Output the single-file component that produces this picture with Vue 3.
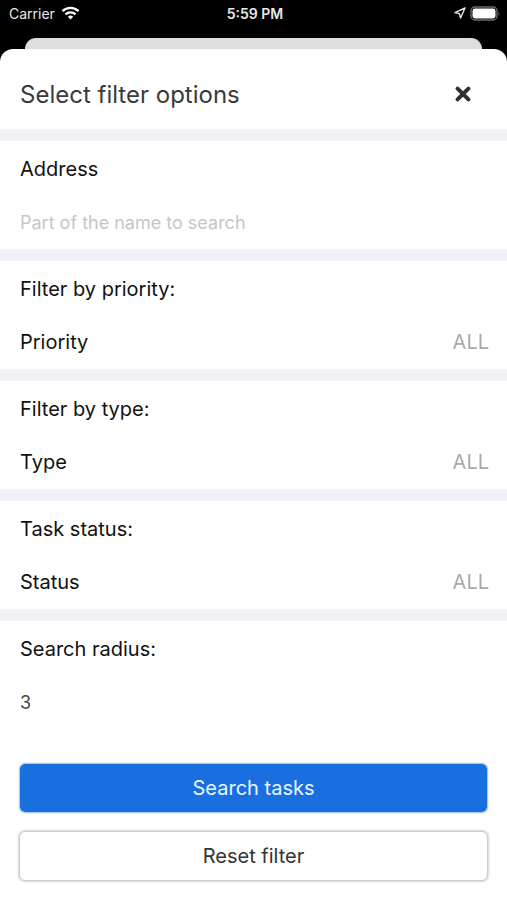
<script setup>
import { reactive, ref } from 'vue'

const selects = [
  { id: 'priority', title: 'Filter by priority:', label: 'Priority', options: ['ALL', 'High', 'Medium', 'Low'] },
  { id: 'type', title: 'Filter by type:', label: 'Type', options: ['ALL', 'Delivery', 'Service'] },
  { id: 'status', title: 'Task status:', label: 'Status', options: ['ALL', 'Open', 'Done'] },
]
const address = ref('')
const radius = ref('3')
const chosen = reactive({ priority: 'ALL', type: 'ALL', status: 'ALL' })

function reset() {
  address.value = ''
  radius.value = '3'
  selects.forEach((s) => { chosen[s.id] = 'ALL' })
}
</script>

<template>
  <div class="screen">
    <header class="statusbar">
      <div class="carrier">
        <span>Carrier</span>
        <svg class="wifi" width="19" height="14" viewBox="0 0 18 14" fill="none" stroke="#fff" stroke-width="2.4">
          <path d="M1 5.2 A11.4 11.4 0 0 1 17 5.2" />
          <path d="M4 8.4 A7.2 7.2 0 0 1 14 8.4" />
          <path d="M9 13.6 L6.3 10.8 A4 4 0 0 1 11.7 10.8 Z" fill="#fff" stroke="none" />
        </svg>
      </div>
      <time class="clock">5:59 PM</time>
      <div class="indicators">
        <svg width="12" height="12" viewBox="0 0 12 12" fill="none" stroke="#e4e4e4" stroke-width="1.4" stroke-linejoin="round">
          <path d="M11 1 L1 5.6 L5.4 6.6 L6.6 11 Z" />
        </svg>
        <svg width="31" height="15" viewBox="0 0 31 15">
          <rect x="1" y="1" width="26" height="13" rx="4" fill="none" stroke="#6c6c6c" stroke-width="1.4" />
          <rect x="2.5" y="2.5" width="23" height="10" rx="2.4" fill="#fff" />
          <path d="M28.6 5.2 Q30.4 7.5 28.6 9.8 Z" fill="#6c6c6c" />
        </svg>
      </div>
    </header>
    <div class="behind"></div>
    <main class="sheet">
      <div class="heading">
        <h1>Select filter options</h1>
        <button class="close" type="button" aria-label="Close">
          <svg width="16" height="16" viewBox="0 0 16 16" stroke="#303030" stroke-width="4" stroke-linecap="round">
            <path d="M2.6 2.6 L13.4 13.4 M13.4 2.6 L2.6 13.4" />
          </svg>
        </button>
      </div>
      <form @submit.prevent>
        <section class="group">
          <h2 class="row"><label for="address">Address</label></h2>
          <div class="row">
            <input id="address" v-model="address" type="text" placeholder="Part of the name to search">
          </div>
        </section>
        <section v-for="s in selects" :key="s.id" class="group">
          <h2 class="row">{{ s.title }}</h2>
          <div class="row">
            <label :for="s.id">{{ s.label }}</label>
            <select :id="s.id" v-model="chosen[s.id]">
              <option v-for="o in s.options" :key="o">{{ o }}</option>
            </select>
          </div>
        </section>
        <section class="group">
          <h2 class="row"><label for="radius">Search radius:</label></h2>
          <div class="row">
            <input id="radius" v-model="radius" type="text" inputmode="numeric">
          </div>
        </section>
        <div class="actions">
          <button class="btn primary" type="submit">Search tasks</button>
          <button class="btn" type="button" @click="reset">Reset filter</button>
        </div>
      </form>
    </main>
  </div>
</template>

<style>
body {
  margin: 0;
  background: #000;
}
</style>

<style scoped>
.screen {
  display: flex;
  flex-direction: column;
  min-height: 100vh;
  background: #000;
  color: #111;
  font-family: Inter, "Liberation Sans", sans-serif;
  font-size: 20px;
}
.statusbar {
  display: grid;
  grid-template-columns: 1fr auto 1fr;
  align-items: center;
  height: 26px;
  margin-bottom: 12px;
  padding: 0 6px 0 9px;
  color: #e8e8e8;
  font-size: 14px;
}
.carrier,
.indicators {
  display: flex;
  align-items: center;
  gap: 6px;
}
.indicators {
  justify-content: flex-end;
  gap: 4px;
}
.clock {
  font-weight: 600;
}
.behind {
  height: 11px;
  margin: 0 25px;
  border-radius: 11px 11px 0 0;
  background: #dedede;
}
.sheet {
  flex: 1;
  border-radius: 13px 13px 0 0;
  background: #fff;
}
.heading {
  display: flex;
  align-items: center;
  justify-content: space-between;
  height: 80px;
  padding: 10px 27px 0 20px;
  box-sizing: border-box;
}
h1 {
  margin: 0;
  color: #3a3a3a;
  font-size: 24px;
  font-weight: 400;
}
.close {
  display: flex;
  padding: 9px;
  border: 0;
  background: none;
}
.group {
  border-top: 12px solid #f1f1f8;
}
.row {
  display: flex;
  align-items: center;
  justify-content: space-between;
  height: 54px;
  margin: 0;
  padding: 0 18px 0 20px;
  box-sizing: border-box;
  font-size: 20px;
  font-weight: 400;
}
h2.row {
  padding-top: 2px;
}
input,
select {
  flex: 1;
  min-width: 0;
  margin: 0;
  padding: 0;
  border: 0;
  outline: 0;
  appearance: none;
  background: none;
  font-family: inherit;
}
input {
  color: #444;
  font-size: 18px;
}
input::placeholder {
  color: #c6c6c8;
  opacity: 1;
}
select {
  color: #aaa;
  font-size: 20px;
  text-align: right;
  text-align-last: right;
}
.actions {
  display: flex;
  flex-direction: column;
  gap: 18px;
  padding: 34px 19px 18px;
}
.btn {
  height: 50px;
  padding: 0;
  border: 1px solid #ccc;
  border-radius: 6px;
  background: #fff;
  box-shadow: 0 0 3px #aaa;
  color: #333;
  font-family: inherit;
  font-size: 20px;
}
.primary {
  border-color: #a9c8f0;
  background: #1a6fe0;
  background-clip: padding-box;
  box-shadow: 0 0 2px #ccc;
  color: #e8f6ff;
}
</style>
